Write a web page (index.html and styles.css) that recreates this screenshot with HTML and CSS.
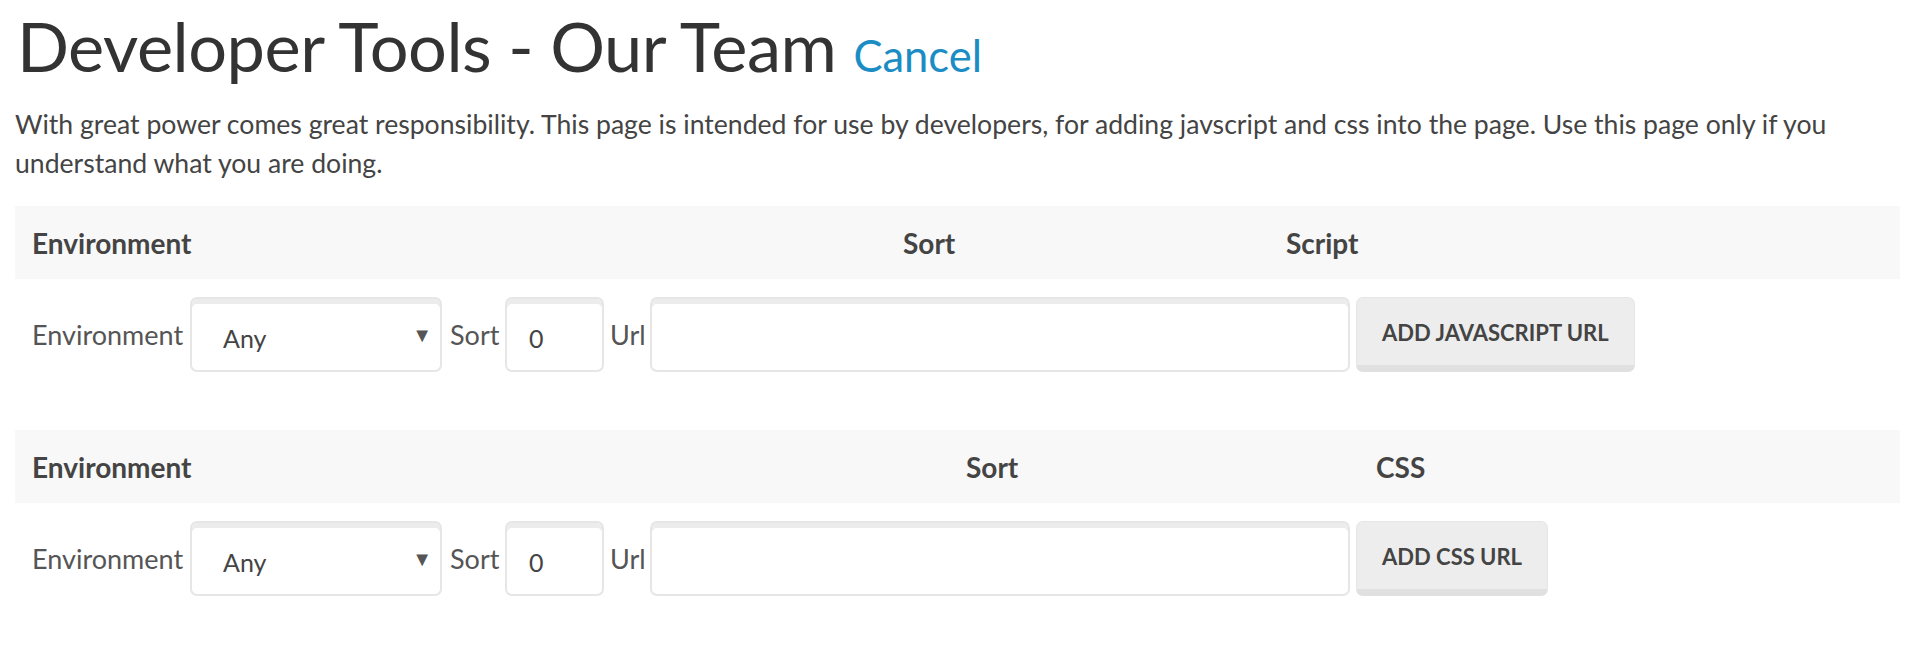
FILE: index.html
```html
<!DOCTYPE html>
<html lang="en">
<head>
<meta charset="utf-8">
<title>Developer Tools - Our Team</title>
<link rel="stylesheet" href="styles.css">
</head>
<body>
<div class="page">
  <h1 class="title">Developer Tools - Our Team <a class="cancel" href="#">Cancel</a></h1>
  <p class="intro">With great power comes great responsibility. This page is intended for use by developers, for adding javscript and css into the page. Use this page only if you understand what you are doing.</p>

  <section class="tool tool-js">
    <div class="tool-head">
      <div class="th">Environment</div>
      <div class="th">Sort</div>
      <div class="th">Script</div>
    </div>
    <form class="tool-row">
      <label class="lbl lbl-env">Environment</label>
      <span class="select-wrap">
        <select class="ctl select"><option>Any</option></select>
        <span class="caret">&#9660;</span>
      </span>
      <label class="lbl lbl-sort">Sort</label>
      <input class="ctl sort" type="text" value="0">
      <label class="lbl lbl-url">Url</label>
      <input class="ctl url" type="text" value="">
      <button class="btn" type="button">Add Javascript Url</button>
    </form>
  </section>

  <section class="tool tool-css">
    <div class="tool-head">
      <div class="th">Environment</div>
      <div class="th">Sort</div>
      <div class="th">CSS</div>
    </div>
    <form class="tool-row">
      <label class="lbl lbl-env">Environment</label>
      <span class="select-wrap">
        <select class="ctl select"><option>Any</option></select>
        <span class="caret">&#9660;</span>
      </span>
      <label class="lbl lbl-sort">Sort</label>
      <input class="ctl sort" type="text" value="0">
      <label class="lbl lbl-url">Url</label>
      <input class="ctl url" type="text" value="">
      <button class="btn" type="button">Add CSS Url</button>
    </form>
  </section>
</div>
</body>
</html>
```

FILE: styles.css
```css
html, body {
  margin: 0;
  padding: 0;
  background: #ffffff;
}

body {
  font-family: Lato, "Open Sans", "Liberation Sans", sans-serif;
  color: #444;
}

.page {
  padding: 0 15px;
}

.title {
  margin: 0;
  padding: 10px 0 0 2px;
  font-size: 68.5px;
  line-height: 72px;
  font-weight: 400;
  color: #333;
  letter-spacing: -0.5px;
}

.cancel {
  font-size: 43.5px;
  color: #1b8dc4;
  text-decoration: none;
  letter-spacing: 0;
}

.intro {
  margin: 14px 0 0 0;
  font-size: 26.6px;
  line-height: 39px;
  color: #444;
}

.tool {
  margin-top: 23px;
}

.tool + .tool {
  margin-top: 40px;
}

.tool-head {
  display: grid;
  height: 73px;
  align-items: center;
  background: #f8f8f8;
}

.tool-js .tool-head {
  grid-template-columns: 871px 383px 1fr;
}

.tool-css .tool-head {
  grid-template-columns: 934px 410px 1fr;
}

.th {
  padding-left: 17px;
  font-size: 28px;
  font-weight: 700;
  color: #444;
}

.tool-row {
  display: flex;
  align-items: center;
  padding: 18px 0 18px 17px;
  margin: 0;
}

.lbl {
  font-size: 27px;
  color: #555;
}

.lbl-env {
  width: 158px;
}

.lbl-sort {
  width: 55px;
  margin-left: 8px;
}

.lbl-url {
  width: 40px;
  margin-left: 6px;
}

.ctl {
  box-sizing: border-box;
  height: 75px;
  border: 2px solid #e6e6e6;
  border-radius: 7px;
  box-shadow: inset 0 5px 0 #ececec;
  background: #fff;
  font-family: inherit;
  font-size: 25px;
  color: #444;
  outline: none;
}

.select-wrap {
  position: relative;
  display: block;
}

.select {
  display: block;
  appearance: none;
  -webkit-appearance: none;
  width: 252px;
  padding: 6px 0 0 31px;
}

.caret {
  position: absolute;
  right: 10px;
  top: 25px;
  font-size: 20px;
  color: #555;
  pointer-events: none;
}

.sort {
  width: 99px;
  padding: 6px 0 0 22px;
}

.url {
  width: 700px;
}

.btn {
  box-sizing: border-box;
  height: 75px;
  margin-left: 6px;
  padding: 2px 25px 0;
  border: 1px solid #e6e6e6;
  border-bottom: 7px solid #e0e0e0;
  border-radius: 7px;
  background: #ededed;
  font-family: inherit;
  font-size: 22px;
  font-weight: 700;
  text-transform: uppercase;
  color: #444;
}
```
